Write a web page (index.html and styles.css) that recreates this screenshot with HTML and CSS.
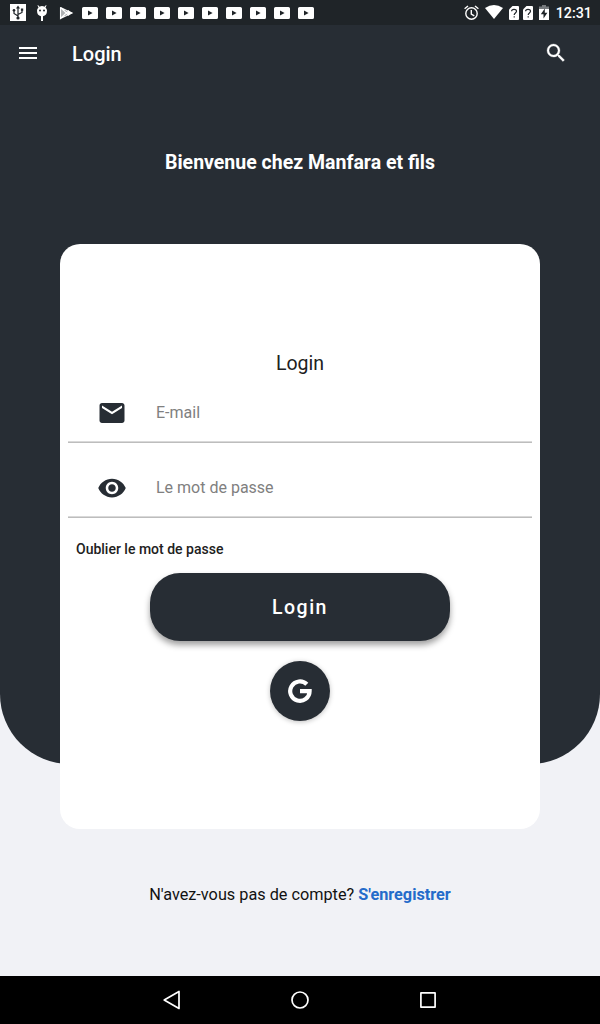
FILE: index.html
```html
<!DOCTYPE html>
<html lang="fr">
<head>
<meta charset="utf-8">
<title>Login</title>
<link rel="stylesheet" href="styles.css">
</head>
<body>
<svg class="symbols" aria-hidden="true">
  <symbol id="video" viewBox="0 0 16 12"><path fill="#fff" fill-rule="evenodd" d="M1.600 0h12.800Q16 0 16 1.600v8.800q0 1.600-1.600 1.600H1.600Q0 12 0 10.400V1.600Q0 0 1.600 0zM6 3.400v5.200L10.600 6z"/></symbol>
  <symbol id="sim" viewBox="0 0 10 14"><path fill="#fff" d="M3.500 0H9q1 0 1 1v12q0 1-1 1H1q-1 0-1-1V3.500z"/><path fill="none" stroke="#1f2428" stroke-width="1.200" d="M2.600 5.300C2.600 2.600 7.500 2.600 7.500 5.300C7.500 7 5.200 7 5.200 9M5.200 10.200v1.400"/></symbol>
</svg>
<div class="screen">
  <header class="status">
    <div class="notifications">
      <svg width="16" height="17" viewBox="0 0 16 17"><path fill="#fff" d="M0 0h16v17H0z"/><g fill="none" stroke="#1f2428" stroke-width="1.200"><path d="M8 3v11M8 12L4 9.500V6.500M8 10.500l4-2V5.500"/></g><g fill="#1f2428"><path d="M8 1.500L10 4.500H6z"/><circle cx="8" cy="14" r="1.600"/><circle cx="4" cy="6.300" r="1.300"/><path d="M10.900 4.500h2.300v2.300h-2.300z"/></g></svg>
      <svg width="16" height="18" viewBox="0 0 16 18"><path fill="#fff" d="M4 1l1.500 1.700Q8 1.500 10.500 2.700L12 1l.5.5-1 1.900Q13 4.600 13 6.500 13 11.600 9 12.200V17H7v-4.800Q3 11.600 3 6.500 3 4.600 4.500 3.400l-1-1.900z"/><circle cx="6" cy="6.500" r="1" fill="#1f2428"/><circle cx="10" cy="6.500" r="1" fill="#1f2428"/></svg>
      <svg width="16" height="14" viewBox="0 0 16 14"><path fill="#aeb1b3" d="M2 1l10 6-10 6z"/><path fill="none" stroke="#fff" stroke-width="1.100" d="M2.500 1.500v11L11 4.500M2.500 1.500L11 9.500M2.500 1.500L14 7 2.500 12.500"/><path fill="#fff" d="M11 5l3.500 2L11 9 9 7z"/></svg>
      <svg width="16" height="12"><use href="#video"/></svg>
      <svg width="16" height="12"><use href="#video"/></svg>
      <svg width="16" height="12"><use href="#video"/></svg>
      <svg width="16" height="12"><use href="#video"/></svg>
      <svg width="16" height="12"><use href="#video"/></svg>
      <svg width="16" height="12"><use href="#video"/></svg>
      <svg width="16" height="12"><use href="#video"/></svg>
      <svg width="16" height="12"><use href="#video"/></svg>
      <svg width="16" height="12"><use href="#video"/></svg>
      <svg width="16" height="12"><use href="#video"/></svg>
    </div>
    <div class="system">
      <svg width="15" height="16" viewBox="0 0 15 16"><g fill="none" stroke="#fff" stroke-width="1.400"><circle cx="7.500" cy="8.500" r="5.700"/><path d="M7.300 5v4l3 1.800M.6 3.800L4 1M14.400 3.800L11 1"/></g></svg>
      <svg class="wifi" width="18" height="14" viewBox="0 0 18 14"><path fill="#fff" d="M0 3Q9-3 18 3L9 14z"/></svg>
      <svg class="sim" width="10" height="14"><use href="#sim"/></svg>
      <svg class="sim2" width="10" height="14"><use href="#sim"/></svg>
      <svg class="battery" width="10" height="15" viewBox="0 0 10 15"><path fill="#777b7e" d="M3 0h4v1.500h3V5H0V1.500h3z"/><path fill="#fff" d="M0 4h10v11H0z"/><path fill="#1f2428" d="M5.800 3.500L1.800 9.300h2.700v4.200L8.400 7.700H5.800z"/></svg>
      <span class="clock">12:31</span>
    </div>
  </header>
  <main class="page">
    <div class="backdrop"></div>
    <div class="content">
      <nav class="appbar">
        <svg width="24" height="24" viewBox="0 0 24 24"><path fill="#fff" d="M3 18h18v-2H3v2zm0-5h18v-2H3v2zm0-7v2h18V6H3z"/></svg>
        <h1 class="appbar-title">Login</h1>
        <svg width="24" height="24" viewBox="0 0 24 24"><path fill="#fff" stroke="#fff" stroke-width=".3" d="M15.500 14h-.79l-.28-.27A6.471 6.471 0 0 0 16 9.500 6.500 6.500 0 1 0 9.500 16c1.610 0 3.090-.59 4.230-1.570l.27.28v.79l5 4.990L20.490 19l-4.990-5zm-6 0C7.010 14 5 11.990 5 9.500S7.010 5 9.500 5 14 7.010 14 9.500 11.990 14 9.500 14z"/></svg>
      </nav>
      <h2 class="welcome">Bienvenue chez Manfara et fils</h2>
      <section class="card">
        <h3 class="card-title">Login</h3>
        <label class="field field-email">
          <svg width="30" height="30" viewBox="0 0 24 24"><path fill="#272d34" d="M20 4H4c-1.100 0-1.990.9-1.990 2L2 18c0 1.100.9 2 2 2h16c1.100 0 2-.9 2-2V6c0-1.100-.9-2-2-2zm0 4l-8 5-8-5V6l8 5 8-5v2z"/></svg>
          <span>E-mail</span>
        </label>
        <label class="field field-password">
          <svg width="30" height="30" viewBox="0 0 24 24"><path fill="#272d34" d="M12 4.500C7 4.500 2.730 7.610 1 12c1.730 4.390 6 7.500 11 7.500s9.270-3.110 11-7.500c-1.730-4.390-6-7.500-11-7.500zM12 17c-2.760 0-5-2.240-5-5s2.240-5 5-5 5 2.240 5 5-2.240 5-5 5zm0-8c-1.660 0-3 1.340-3 3s1.340 3 3 3 3-1.340 3-3-1.340-3-3-3z"/></svg>
          <span>Le mot de passe</span>
        </label>
        <div class="forgot">Oublier le mot de passe</div>
        <button class="submit">Login</button>
        <button class="google" aria-label="Google">
          <svg width="26" height="26" viewBox="0 0 26 26"><path fill="none" stroke="#fff" stroke-width="4.200" d="M19.800 6.300A9.700 9.700 0 1 0 22.600 13.200H13"/></svg>
        </button>
      </section>
      <p class="register">N'avez-vous pas de compte? <b>S'enregistrer</b></p>
    </div>
  </main>
  <footer class="navbar">
    <svg width="20" height="20" viewBox="0 0 20 20"><path d="M17 1.500v17L2.200 10z"/></svg>
    <svg width="20" height="20" viewBox="0 0 20 20"><circle cx="10" cy="10" r="8"/></svg>
    <svg width="20" height="20" viewBox="0 0 20 20"><rect x="2.900" y="2.900" width="14.200" height="14.200"/></svg>
  </footer>
</div>
</body>
</html>
```

FILE: styles.css
```css
* { box-sizing: border-box; }
body { margin: 0; font-family: Roboto, sans-serif; }
h1, h2, h3, p { margin: 0; }
svg { display: block; flex: none; }
button { border: 0; padding: 0; font-family: inherit; color: #fff; background: #272d34; }
.symbols { display: none; }
.screen { display: flex; flex-direction: column; width: 600px; height: 1024px; background: #f1f2f6; }
.status { display: flex; justify-content: space-between; align-items: center; height: 25px; padding: 0 8px 0 10px; background: #1f2428; }
.notifications { display: flex; align-items: center; gap: 8px; }
.system { display: flex; align-items: center; color: #fff; }
.wifi { margin-left: 6px; margin-top: -2px; }
.sim { margin-left: 6px; }
.sim2 { margin-left: 4px; }
.battery { margin-left: 6px; margin-top: -1px; }
.clock { margin-left: 7px; font-size: 14.3px; font-weight: 500; line-height: 25px; padding-top: 1px; }
.page { display: grid; flex: 1; grid-template-columns: 1fr; grid-template-rows: 1fr; }
.backdrop, .content { grid-area: 1 / 1; }
.backdrop { height: 739px; background: #272d34; border-radius: 0 0 70px 70px; }
.content { display: flex; flex-direction: column; align-items: center; }
.appbar { display: flex; align-items: center; width: 100%; height: 56px; padding: 0 32px 0 16px; }
.appbar-title { flex: 1; margin: 2px 0 0 32px; font-size: 20px; font-weight: 500; line-height: 24px; color: #fff; }
.welcome { margin-top: 70px; font-size: 19.500px; font-weight: 700; line-height: 24px; color: #fff; }
.card { display: flex; flex-direction: column; align-items: center; width: 480px; height: 585px; margin-top: 69px; padding: 108px 8px 0; border-radius: 20px; background: #fff; }
.card-title { font-size: 19.500px; font-weight: 400; line-height: 24px; color: #212121; }
.field { display: flex; align-items: center; gap: 29px; width: 100%; height: 75px; padding: 16px 29px 0; font-size: 16px; color: #808080; border-bottom: 1px solid #bdbdbd; box-shadow: inset 0 -1px #d9d9d9; }
.field-email { height: 67px; padding-top: 8px; }
.field-email svg { margin-top: -1px; }
.field span { margin-top: -2px; }
.forgot { align-self: flex-start; margin: 23px 0 0 8px; font-size: 14px; font-weight: 500; line-height: 16px; color: #212121; }
.submit { flex: none; width: 300px; height: 68.400px; margin-top: 16px; border-radius: 30px; font-size: 19.500px; font-weight: 500; letter-spacing: 1.500px; box-shadow: 0 4px 6px rgba(0,0,0,.38); }
.google { display: grid; place-items: center; flex: none; width: 60px; height: 60px; margin-top: 20px; border-radius: 50%; box-shadow: 0 1px 5px rgba(0,0,0,.25); }
.register { margin-top: 56px; font-size: 16.250px; line-height: 20px; color: #111; }
.register b { color: #246bca; }
.navbar { display: flex; justify-content: center; align-items: center; gap: 108px; height: 48px; background: #000; }
.navbar svg { fill: none; stroke: #fff; stroke-width: 1.700; stroke-linejoin: round; }
```
